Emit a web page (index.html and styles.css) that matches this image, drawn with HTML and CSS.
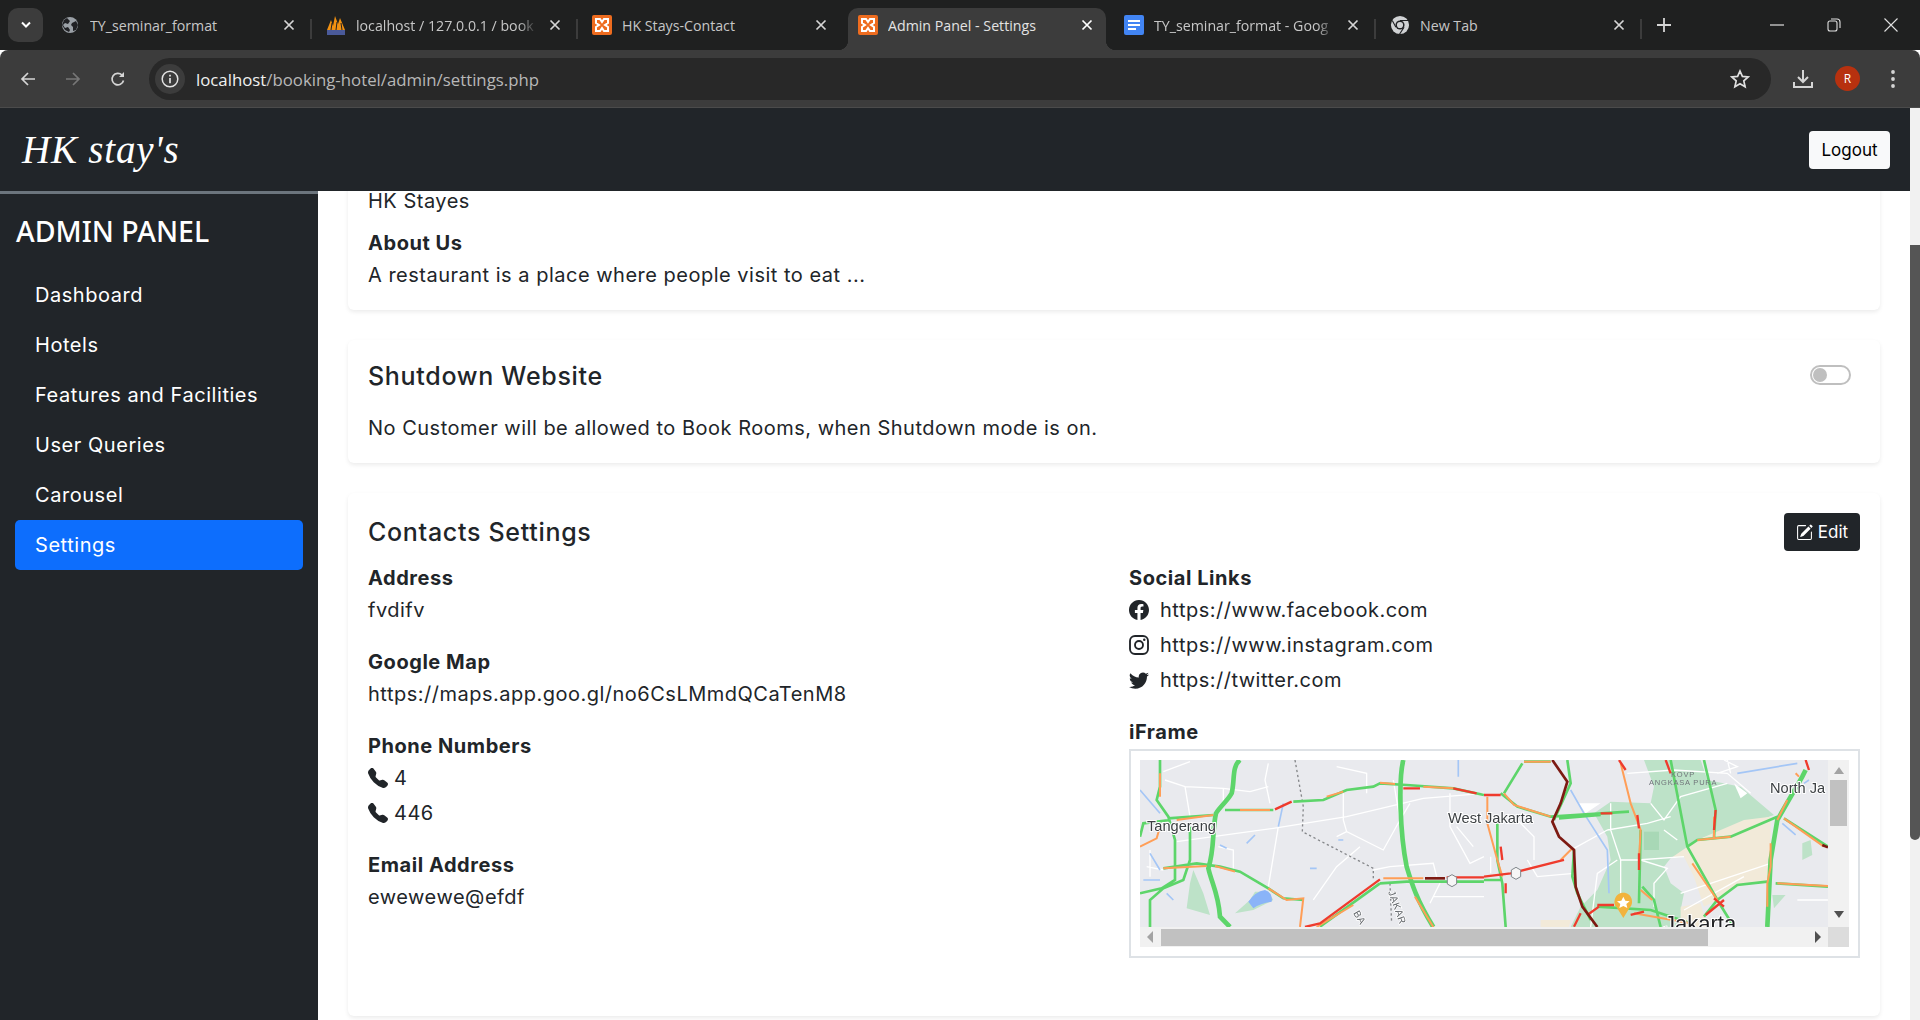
FILE: index.html
```html
<!DOCTYPE html>
<html lang="en">
<head>
  <meta charset="UTF-8">
  <title>Admin Panel - Settings</title>
  <link rel="stylesheet" href="styles.css">
</head>
<body>
  <div class="tabstrip">
    <div class="tab-search">
      <svg width="12" height="8" viewBox="0 0 12 8"><path d="M2 1.5 6 5.5 10 1.5" fill="none" stroke="#fff" stroke-width="2"/></svg>
    </div>
    <div class="tab">
      <svg class="favicon" viewBox="-2 -2 20 20"><circle cx="8" cy="8" r="8" fill="#9aa0a6"/><path d="M5 1 8 4 6 7 3 6 1 8 3 11 6 10 8 13 7 15 3 13 0 8 2 3zM10 6 14 4 16 8 14 13 11 14 11 10 9 8z" fill="#202124"/></svg>
      <span class="tab-title">TY_seminar_format</span>
      <svg class="tab-close" viewBox="0 0 16 16"><path d="M3.5 3.5 12.5 12.5M12.5 3.5 3.5 12.5" stroke="#d5d5d5" stroke-width="1.7"/></svg>
    </div>
    <div class="tab">
      <svg class="favicon" viewBox="0 0 20 20"><path d="M1 15 5 5 7 11 9 1 12 9 14 3 19 15z" fill="#f29111"/><path d="M1 15h18v5H1z" fill="#4a5a9a"/><path d="M6 8 5 15M11 7 10 15M15 8 16 15" stroke="#202124"/></svg>
      <span class="tab-title tab-fade">localhost / 127.0.0.1 / book</span>
      <svg class="tab-close" viewBox="0 0 16 16"><path d="M3.5 3.5 12.5 12.5M12.5 3.5 3.5 12.5" stroke="#d5d5d5" stroke-width="1.7"/></svg>
    </div>
    <div class="tab">
      <svg class="favicon" viewBox="0 0 20 20"><rect width="20" height="20" rx="2" fill="#ee6c1f"/><path d="M4 4h4l2 3 2-3h4v4l-3 2 3 2v4h-4l-2-3-2 3H4v-4l3-2-3-2z" fill="none" stroke="#fff" stroke-width="2"/></svg>
      <span class="tab-title">HK Stays-Contact</span>
      <svg class="tab-close" viewBox="0 0 16 16"><path d="M3.5 3.5 12.5 12.5M12.5 3.5 3.5 12.5" stroke="#d5d5d5" stroke-width="1.7"/></svg>
    </div>
    <div class="tab tab-active">
      <svg class="favicon" viewBox="0 0 20 20"><rect width="20" height="20" rx="2" fill="#ee6c1f"/><path d="M4 4h4l2 3 2-3h4v4l-3 2 3 2v4h-4l-2-3-2 3H4v-4l3-2-3-2z" fill="none" stroke="#fff" stroke-width="2"/></svg>
      <span class="tab-title">Admin Panel - Settings</span>
      <svg class="tab-close" viewBox="0 0 16 16"><path d="M3.5 3.5 12.5 12.5M12.5 3.5 3.5 12.5" stroke="#fff" stroke-width="1.7"/></svg>
    </div>
    <div class="tab">
      <svg class="favicon" viewBox="0 0 20 20"><rect width="20" height="20" rx="2" fill="#4285f4"/><path d="M4 6h12M4 10h12M4 14h8" stroke="#fff" stroke-width="2"/></svg>
      <span class="tab-title tab-fade">TY_seminar_format - Goog</span>
      <svg class="tab-close" viewBox="0 0 16 16"><path d="M3.5 3.5 12.5 12.5M12.5 3.5 3.5 12.5" stroke="#d5d5d5" stroke-width="1.7"/></svg>
    </div>
    <div class="tab">
      <svg class="favicon" viewBox="-1 -1 22 22"><circle cx="10" cy="10" r="10" fill="#d0d2d4"/><circle cx="10" cy="10" r="5" fill="#202124"/><circle cx="10" cy="10" r="3.4" fill="#d0d2d4"/><path d="M10 5h9M5.5 12.5 1.5 5M14.5 12.5 9.5 20" stroke="#202124" stroke-width="1.2"/></svg>
      <span class="tab-title">New Tab</span>
      <svg class="tab-close" viewBox="0 0 16 16"><path d="M3.5 3.5 12.5 12.5M12.5 3.5 3.5 12.5" stroke="#d5d5d5" stroke-width="1.7"/></svg>
    </div>
    <svg class="tab-new" viewBox="0 0 14 14"><path d="M7 0v14M0 7h14" stroke="#d5d5d5" stroke-width="1.8"/></svg>
    <div class="window-btns">
      <svg viewBox="0 0 14 14"><path d="M0 7h14" stroke="#e0e0e0" stroke-width="1.2"/></svg>
      <svg viewBox="0 0 14 14"><rect x="1" y="3" width="9" height="10" rx="2" fill="none" stroke="#e0e0e0" stroke-width="1.1"/><path d="M4 1h6a3 3 0 0 1 3 3v6" fill="none" stroke="#e0e0e0" stroke-width="1.1"/></svg>
      <svg viewBox="0 0 14 14"><path d="M0.5 0.5 13.5 13.5M13.5 0.5 0.5 13.5" stroke="#e0e0e0" stroke-width="1.1"/></svg>
    </div>
  </div>

  <div class="toolbar">
    <svg class="tool-icon" viewBox="0 0 16 16"><path d="M15 8H2M8 2 2 8l6 6" fill="none" stroke="#d5d5d5" stroke-width="1.7"/></svg>
    <svg class="tool-icon" viewBox="0 0 16 16"><path d="M1 8h13M8 2l6 6-6 6" fill="none" stroke="#777" stroke-width="1.7"/></svg>
    <svg class="tool-icon" viewBox="0 0 16 16"><path d="M13.5 9.5A5.8 5.8 0 1 1 12 4" fill="none" stroke="#d5d5d5" stroke-width="1.7"/><path d="M14 1v5H9z" fill="#d5d5d5"/></svg>
    <div class="omnibox">
      <div class="site-info">
        <svg width="18" height="18" viewBox="0 0 18 18"><circle cx="9" cy="9" r="7.8" fill="none" stroke="#e3e3e3" stroke-width="1.5"/><path d="M9 8v5.2M9 4.8v1.8" stroke="#e3e3e3" stroke-width="1.7"/></svg>
      </div>
      <span class="url"><b>localhost</b>/booking-hotel/admin/settings.php</span>
      <svg class="star" viewBox="0 0 20 20"><path d="M10 2l2.4 5.4 5.8.6-4.4 3.9 1.3 5.8-5.1-3-5.1 3 1.3-5.8L1.8 8l5.8-.6z" fill="none" stroke="#e0e0e0" stroke-width="1.7"/></svg>
    </div>
    <svg class="download" viewBox="0 0 20 20"><path d="M10 1v11M5 8l5 5 5-5" fill="none" stroke="#d5d5d5" stroke-width="2"/><path d="M1 13v5h18v-5" fill="none" stroke="#d5d5d5" stroke-width="2"/></svg>
    <div class="avatar">R</div>
    <svg class="dots" viewBox="0 0 4 18"><circle cx="2" cy="2" r="1.9" fill="#d5d5d5"/><circle cx="2" cy="9" r="1.9" fill="#d5d5d5"/><circle cx="2" cy="16" r="1.9" fill="#d5d5d5"/></svg>
  </div>

  <div class="page">
    <div class="view">
      <header class="topbar">
        <span class="logo">HK stay's</span>
        <a class="btn-logout">Logout</a>
      </header>
      <div class="layout">
        <aside class="sidebar">
          <h3>ADMIN PANEL</h3>
          <ul>
            <li>Dashboard</li>
            <li>Hotels</li>
            <li>Features and Facilities</li>
            <li>User Queries</li>
            <li>Carousel</li>
            <li class="active">Settings</li>
          </ul>
        </aside>
        <main class="main-content">
          <section class="card card-clipped">
            <p class="value first-value">HK Stayes</p>
            <h6>About Us</h6>
            <p class="value">A restaurant is a place where people visit to eat ...</p>
          </section>

          <section class="card">
            <div class="card-head shutdown-head">
              <h5>Shutdown Website</h5>
              <span class="switch"></span>
            </div>
            <p class="value">No Customer will be allowed to Book Rooms, when Shutdown mode is on.</p>
          </section>

          <section class="card">
            <div class="card-head">
              <h5>Contacts Settings</h5>
              <a class="btn-edit">
                <svg viewBox="0 0 16 16"><path fill="#fff" d="M15.502 1.94a.5.5 0 0 1 0 .706L14.459 3.69l-2-2L13.502.646a.5.5 0 0 1 .707 0l1.293 1.293zm-1.75 2.456-2-2L4.939 9.21a.5.5 0 0 0-.121.196l-.805 2.414a.25.25 0 0 0 .316.316l2.414-.805a.5.5 0 0 0 .196-.12l6.813-6.814z"/><path fill="#fff" d="M1 13.5A1.5 1.5 0 0 0 2.5 15h11a1.5 1.5 0 0 0 1.5-1.5v-6a.5.5 0 0 0-1 0v6a.5.5 0 0 1-.5.5h-11a.5.5 0 0 1-.5-.5v-11a.5.5 0 0 1 .5-.5H9a.5.5 0 0 0 0-1H2.5A1.5 1.5 0 0 0 1 2.5v11z"/></svg>
                Edit
              </a>
            </div>
            <div class="contact-grid">
              <div>
                <div class="group">
                  <h6>Address</h6>
                  <p class="value">fvdifv</p>
                </div>
                <div class="group">
                  <h6>Google Map</h6>
                  <p class="value">https://maps.app.goo.gl/no6CsLMmdQCaTenM8</p>
                </div>
                <div class="group">
                  <h6>Phone Numbers</h6>
                  <p class="value row">
                    <svg class="phone" viewBox="0 0 16 16"><path d="M1.885.511a1.745 1.745 0 0 1 2.61.163L6.29 2.98c.329.423.445.974.315 1.494l-.547 2.19a.678.678 0 0 0 .178.643l2.457 2.457a.678.678 0 0 0 .644.178l2.189-.547a1.745 1.745 0 0 1 1.494.315l2.306 1.794c.829.645.905 1.87.163 2.611l-1.034 1.034c-.74.74-1.846 1.065-2.877.702a18.634 18.634 0 0 1-7.01-4.42 18.634 18.634 0 0 1-4.42-7.009c-.362-1.03-.037-2.137.703-2.877L1.885.511z"/></svg>
                    4
                  </p>
                  <p class="value row">
                    <svg class="phone" viewBox="0 0 16 16"><path d="M1.885.511a1.745 1.745 0 0 1 2.61.163L6.29 2.98c.329.423.445.974.315 1.494l-.547 2.19a.678.678 0 0 0 .178.643l2.457 2.457a.678.678 0 0 0 .644.178l2.189-.547a1.745 1.745 0 0 1 1.494.315l2.306 1.794c.829.645.905 1.87.163 2.611l-1.034 1.034c-.74.74-1.846 1.065-2.877.702a18.634 18.634 0 0 1-7.01-4.42 18.634 18.634 0 0 1-4.42-7.009c-.362-1.03-.037-2.137.703-2.877L1.885.511z"/></svg>
                    446
                  </p>
                </div>
                <div class="group">
                  <h6>Email Address</h6>
                  <p class="value">ewewewe@efdf</p>
                </div>
              </div>
              <div>
                <div class="group">
                  <h6>Social Links</h6>
                  <p class="value row">
                    <svg class="social" viewBox="0 0 16 16"><path d="M16 8.049c0-4.446-3.582-8.05-8-8.05C3.58 0-.002 3.603-.002 8.05c0 4.017 2.926 7.347 6.75 7.951v-5.625h-2.03V8.05H6.75V6.275c0-2.017 1.195-3.131 3.022-3.131.876 0 1.791.157 1.791.157v1.98h-1.009c-.993 0-1.303.621-1.303 1.258v1.51h2.218l-.354 2.326H9.25V16c3.824-.604 6.75-3.934 6.75-7.951z"/></svg>
                    https://www.facebook.com
                  </p>
                  <p class="value row">
                    <svg class="social" viewBox="0 0 16 16"><rect x=".8" y=".8" width="14.4" height="14.4" rx="4" fill="none" stroke="#212529" stroke-width="1.5"/><circle cx="8" cy="8" r="3.2" fill="none" stroke="#212529" stroke-width="1.5"/><circle cx="12.2" cy="3.8" r="1"/></svg>
                    https://www.instagram.com
                  </p>
                  <p class="value row">
                    <svg class="social" viewBox="0 0 16 16"><path d="M5.026 15c6.038 0 9.341-5.003 9.341-9.334 0-.14 0-.282-.006-.422A6.685 6.685 0 0 0 16 3.542a6.658 6.658 0 0 1-1.889.518 3.301 3.301 0 0 0 1.447-1.817 6.533 6.533 0 0 1-2.087.793A3.286 3.286 0 0 0 7.875 6.03a9.325 9.325 0 0 1-6.767-3.429 3.289 3.289 0 0 0 1.018 4.382A3.323 3.323 0 0 1 .64 6.575v.045a3.288 3.288 0 0 0 2.632 3.218 3.203 3.203 0 0 1-.865.115 3.23 3.23 0 0 1-.614-.057 3.283 3.283 0 0 0 3.067 2.277A6.588 6.588 0 0 1 .78 13.58a6.32 6.32 0 0 1-.78-.045A9.344 9.344 0 0 0 5.026 15z"/></svg>
                    https://twitter.com
                  </p>
                </div>
                <h6>iFrame</h6>
                <div class="map-frame">
                  <div class="map-row">
                    <svg class="map" width="688" height="167" viewBox="0 0 688 167">
                      <rect width="688" height="167" fill="#e9eaee"/>
                      <!-- west half -->
                      <g transform="scale(.3333)">
                        <path class="park" d="M160 330 190 400 210 465 140 445 150 370zM285 460 330 420 345 395 385 395 400 420 340 450z"/>
                        <path class="lake" d="M325 425Q345 395 375 390 400 400 395 425 360 430 340 445z"/>
                        <path class="minor" d="M70 35 150 5M75 60 135 80 250 85 330 95 385 80M135 80 150 170M250 85V140M385 10 375 60 390 130M110 245 400 205 620 170 850 115 1032 100M415 200 385 380M235 260 280 270V330M610 100V180L620 215 730 270 780 180 760 60M590 230 620 215M660 260 590 320 520 420M700 330 750 320 880 310 890 350M780 180 810 130M930 100V200L990 310 1032 290M880 410H1032M870 430 900 370M590 20 680 40V100M20 320 70 330M30 270V350M950 200 1000 260"/>
                        <path class="river" d="M0 90 60 160M30 280 60 330M10 360H60M80 400 100 420M320 250 345 225M510 325H530M595 240H610M955 0V50M430 130 415 200M240 255 260 265"/>
                        <path class="border" d="M465 0 490 140 487 215 700 325V360M750 370 755 490"/>
                        <path class="road-g road-wide" d="M300 0C275 20 285 60 275 100 265 120 240 140 228 160 215 220 225 260 205 325 215 370 235 400 240 470L270 501M790 0C775 60 780 220 800 320 815 370 830 420 880 501"/>
                        <path class="road-g" d="M60 0V80L50 120 85 170 105 240V360L65 385 0 400M150 200V300L130 360 70 385 30 420V501M85 175 220 165M0 230 10 190 90 180M255 150H400M460 125 550 120 620 90 700 80 720 70 800 75 940 85 1032 105M70 325 170 310 240 320 300 335 385 385 430 415 490 420M720 370 800 365H1032M540 500 720 370"/>
                        <path class="road-o" d="M60 40V110M0 260 50 235 60 200M110 180 220 165M300 150H390M70 325 200 318M225 318 285 335M385 385 440 420 490 415 480 501M560 110 610 95M720 68 765 72M850 80 940 85M730 355H850M640 435 530 501M825 410 880 501"/>
                        <path class="road-r" d="M495 501 540 490 720 358M405 148 455 125M790 85H840M940 85 1010 100M920 352H1032"/>
                        <path class="road-d" d="M855 355H915"/>
                        <path class="shield" d="M922 352 936 344 950 352V372L936 380 922 372z"/>
                      </g>
                      <!-- east half -->
                      <g transform="translate(344) scale(.3333)">
                        <path class="park" d="M480 0H650L670 60 770 80 870 165 800 190 720 210 640 240 600 290 560 295 540 320 560 370 600 400 590 450 640 501H260L290 440 340 390 380 300 370 230 330 160 380 125 500 130 510 80zM955 250 980 240 985 285 955 300zM865 405H905L870 445z"/>
                        <path class="park-dark" d="M480 215H525V270H480z"/>
                        <path class="sand" d="M640 240 780 180 860 170V310L850 360 760 380 700 420 660 440 630 350 600 290 560 295zM170 480H260L255 501H170zM590 440 650 430 670 501H590z"/>
                        <path class="minor" d="M430 40 570 30 730 40 800 100M500 130 540 180 590 110 730 70M380 130V210L410 300H460L600 290M370 210 490 190 560 170M270 265 370 210M400 300 340 340 320 501M410 300V400M470 300 550 325 510 370V440M590 400 860 310M600 450 780 350M540 210 580 240M100 180 150 230V300M130 300 160 350 270 340M20 290V340M700 40 760 20 720 0M940 420H1032M730 0 740 40"/>
                        <path d="M285 130H350L305 160z" fill="#fff"/>
                        <path d="M750 70 790 100 770 115z" fill="#fff"/>
                        <path class="river" d="M260 90 300 160 370 270 375 400M760 40 940 10M895 190 935 225M960 70 975 60"/>
                        <path class="road-g road-wide" d="M965 30 955 50 880 180 860 300 850 501"/>
                        <path class="road-g" d="M120 5H200M115 10 60 100M250 0 260 70 210 180M50 100 100 140 200 170 435 155M225 175 350 165M0 360H55M270 270 265 350 280 400 320 480M40 190V300L55 370 65 501M470 210 465 430M475 380 510 420 530 501M560 0 610 260 700 420 750 501M660 0 695 150 690 235M610 260 640 240 740 230 880 170M900 175 1032 260M660 470 700 420 760 375 850 365M875 370 1032 380M340 440 500 450 620 490"/>
                        <path class="road-o" d="M10 110V190L40 300 55 350M60 100 90 135 200 170M410 10 440 130 470 210 465 300M625 310 700 420M640 240 740 230M690 170V235M910 120 880 180M860 250V320L850 370V440M880 370 1032 378M900 175 1020 260M470 390 505 420M450 460 620 490M230 300 265 265M935 40 945 50M120 5H200"/>
                        <path class="road-r" d="M0 350 80 340 240 300M0 105H50M545 0 560 40M405 0 425 30M965 0 975 30M350 160H385M460 165 465 205M465 280V330M50 260 55 300M65 370V400M695 150 690 210M665 465 720 420M690 415 720 440M340 435H390M310 465 345 440M270 500 290 460M440 465 480 455"/>
                        <path class="road-d" d="M205 0 250 65 230 130 205 185 225 230 270 270 275 380 295 440 340 501M1015 255 1032 262"/>
                        <path class="shield" d="M82 330 96 322 110 330V350L96 358 82 350z"/>
                        <path d="M418 398C392 398 385 430 398 442L418 474 438 442C451 430 444 398 418 398z" fill="#f2b33d"/>
                        <path d="M418 410 424 422 437 424 427 432 430 444 418 438 406 444 409 432 399 424 412 422z" fill="#fff"/>
                      </g>
                      <text class="map-label" x="7" y="71">Tangerang</text>
                      <text class="map-label" x="308" y="63">West Jakarta</text>
                      <text class="map-label map-big" x="524" y="171">Jakarta</text>
                      <text class="map-label" x="630" y="33">North Ja</text>
                      <text class="map-tiny" x="531" y="17">KOVP</text>
                      <text class="map-tiny" x="509" y="25">ANGKASA PURA</text>
                      <text class="map-road" transform="translate(248 132) rotate(70)">JAKAR</text>
                      <text class="map-road" transform="translate(213 153) rotate(60)">BA</text>
                    </svg>
                    <div class="map-vbar">
                      <svg width="10" height="7" viewBox="0 0 10 7"><path d="M5 0l5 7H0z" fill="#a3a3a3"/></svg>
                      <span class="map-vthumb"></span>
                      <svg class="map-vdown" width="10" height="7" viewBox="0 0 10 7"><path d="M0 0h10L5 7z" fill="#505050"/></svg>
                    </div>
                  </div>
                  <div class="map-hbar">
                    <svg width="6" height="12" viewBox="0 0 6 12"><path d="M6 0v12L0 6z" fill="#a3a3a3"/></svg>
                    <span class="map-hthumb"></span>
                    <svg width="6" height="12" viewBox="0 0 6 12"><path d="M0 0v12l6-6z" fill="#505050"/></svg>
                    <span class="map-corner"></span>
                  </div>
                </div>
              </div>
            </div>
          </section>
        </main>
      </div>
    </div>
    <div class="page-scroll"><span class="page-thumb"></span></div>
  </div>
</body>
</html>
```

FILE: styles.css
```css
* { margin: 0; padding: 0; box-sizing: border-box; }
html, body { height: 100%; overflow: hidden; }
body { font-family: Inter, "Noto Sans", sans-serif; background: #fff; color: #212529; display: flex; flex-direction: column; }

/* browser chrome */
.tabstrip { height: 50px; background: #1f2020; display: flex; align-items: flex-start; padding-left: 8px; font-family: "Open Sans", sans-serif; flex-shrink: 0; }
.tab-search { width: 35px; height: 34px; margin-top: 8px; margin-right: 3px; border-radius: 10px; background: #3c3c3c; display: flex; align-items: center; justify-content: center; }
.tab { position: relative; width: 258px; height: 42px; margin: 8px 4px 0; padding: 0 11px 8px 10px; display: flex; align-items: center; gap: 10px; color: #c7c7c7; font-size: 14.2px; }
.tab::after { content: ""; position: absolute; right: -4px; top: 11px; width: 2px; height: 20px; background: #3c3c3c; }
.tab:nth-of-type(4)::after { background: transparent; }
.tab-active { background: #3c3c3c; color: #e3e3e3; border-radius: 10px 10px 0 0; }
.tab-active::before { content: ""; position: absolute; left: -10px; bottom: 0; width: 10px; height: 10px; background: radial-gradient(circle at 0 0, transparent 10px, #3c3c3c 10.5px); }
.tab-active::after { right: -10px; top: auto; bottom: 0; width: 10px; height: 10px; background: radial-gradient(circle at 100% 0, transparent 10px, #3c3c3c 10.5px); }
.favicon { width: 20px; height: 20px; flex-shrink: 0; }
.tab-title { flex: 1; white-space: nowrap; overflow: hidden; }
.tab-fade { -webkit-mask-image: linear-gradient(to right, #000 90%, transparent); mask-image: linear-gradient(to right, #000 90%, transparent); }
.tab-close { width: 16px; height: 16px; flex-shrink: 0; }
.tab-new { width: 14px; height: 14px; margin: 18px 0 0 15px; }
.window-btns { margin-left: 99px; margin-top: 18px; display: flex; gap: 43px; }
.window-btns svg { width: 14px; height: 14px; }

.toolbar { height: 58px; background: #3c3c3c; border-bottom: 1px solid #4b4b4b; border-radius: 8px 8px 0 0; display: flex; align-items: center; padding-left: 20px; flex-shrink: 0; }
.tool-icon { width: 16px; height: 16px; margin-right: 29px; }
.omnibox { width: 1622px; height: 42px; margin-left: -6px; background: #282828; border-radius: 21px; display: flex; align-items: center; padding: 0 21px 0 6px; }
.site-info { width: 30px; height: 30px; border-radius: 50%; background: #3c3c3c; display: flex; align-items: center; justify-content: center; margin-right: 11px; }
.url { flex: 1; padding-top: 1px; font-family: "Open Sans", sans-serif; font-size: 16.8px; color: #b8b8b8; white-space: nowrap; }
.url b { font-weight: 400; color: #f0f0f0; }
.star { width: 20px; height: 20px; }
.download { width: 20px; height: 20px; margin-left: 22px; }
.avatar { width: 25px; height: 25px; margin-left: 22px; border-radius: 50%; background: #b7310f; color: #fff; font-family: "Open Sans", sans-serif; font-size: 12px; display: flex; align-items: center; justify-content: center; }
.dots { width: 4px; height: 18px; margin-left: 31px; }

/* page */
.page { flex: 1; display: flex; min-height: 0; }
.view { flex: 1; min-width: 0; display: flex; flex-direction: column; }
.page-scroll { width: 10px; background: #f1f1f1; }
.page-thumb { display: block; width: 10px; height: 595px; margin-top: 137px; background: #555; border-radius: 0 0 5px 5px; }

.topbar { height: 83px; background: #212529; display: flex; align-items: center; justify-content: space-between; padding: 0 20px 0 22px; flex-shrink: 0; }
.logo { font-family: "Liberation Serif", serif; font-style: italic; font-size: 39px; color: #fff; letter-spacing: .8px; }
.btn-logout { width: 81px; height: 38px; background: #f8f9fa; border-radius: 4px; color: #000; font-size: 17px; display: flex; align-items: center; justify-content: center; }

.layout { flex: 1; display: flex; min-height: 0; }
.sidebar { width: 318px; background: #212529; border-top: 3px solid #6c757d; color: #fff; padding: 0 15px; flex-shrink: 0; }
.sidebar h3 { font-family: "Noto Sans", sans-serif; font-weight: 500; font-size: 28.5px; line-height: 40px; padding-top: 17px; padding-left: 1px; margin-bottom: 19px; }
.sidebar ul { list-style: none; }
.sidebar li { height: 50px; line-height: 50px; padding-left: 20px; font-size: 20px; border-radius: 5px; letter-spacing: .55px; }
.sidebar li.active { background: #0d6efd; }

.main-content { flex: 1; min-width: 0; padding: 0 30px; overflow: hidden; background: #fff; }
.card { background: #fff; border-radius: 6px; box-shadow: 0 2px 4px rgba(0,0,0,.08); padding: 20px; margin-bottom: 30px; }
.card-clipped { margin-top: -25px; }
.value { font-size: 20px; line-height: 30px; letter-spacing: .5px; }
.first-value { margin-bottom: 15px; }
h6 { font-size: 20px; line-height: 24px; font-weight: 700; margin-bottom: 5px; letter-spacing: .55px; }
h5 { font-size: 25px; line-height: 30px; font-weight: 500; letter-spacing: .7px; }
.card-head { display: flex; align-items: center; justify-content: space-between; height: 38px; margin-bottom: 15px; }
.shutdown-head { height: 32px; margin-bottom: 21px; }
.switch { position: relative; width: 41px; height: 20px; margin-right: 9px; margin-top: -2px; border: 2px solid #bfbfbf; border-radius: 10px; background: #fff; }
.switch::after { content: ""; position: absolute; left: 1px; top: 1px; width: 14px; height: 14px; border-radius: 50%; background: #bfbfbf; }
.btn-edit { width: 76px; height: 38px; background: #212529; border-radius: 4px; color: #fff; font-size: 17px; display: flex; align-items: center; justify-content: center; gap: 5px; }
.btn-edit svg { width: 17px; height: 17px; }

.contact-grid { display: grid; grid-template-columns: 1fr 1fr; column-gap: 30px; }
.group { margin-bottom: 25px; }
.row { display: flex; align-items: center; margin-bottom: 5px; }
.phone { width: 20px; height: 20px; margin-right: 6px; fill: #212529; }
.social { width: 20px; height: 20px; margin-right: 11px; fill: #212529; }

.map-frame { border: 2px solid #dee2e6; padding: 9px; margin-bottom: 38px; width: 731px; height: 209px; }
.map-row { display: flex; height: 167px; }
.map { display: block; flex-shrink: 0; filter: blur(.3px); }
.park { fill: #bde2c8; }
.park-dark { fill: #a8d8b6; }
.sand { fill: #f2ead9; }
.lake { fill: #8ab4f8; }
.minor { fill: none; stroke: #fff; stroke-width: 4; }
.river { fill: none; stroke: #a4c6f6; stroke-width: 5; }
.border { fill: none; stroke: #85878a; stroke-width: 4; stroke-dasharray: 7 8; }
.road-g { fill: none; stroke: #5dd56a; stroke-width: 8; }
.road-wide { stroke-width: 14; }
.road-o { fill: none; stroke: #ff9e57; stroke-width: 6; }
.road-r { fill: none; stroke: #ef3b2d; stroke-width: 7; }
.road-d { fill: none; stroke: #7d1a12; stroke-width: 8; }
.shield { fill: #f6f6f6; stroke: #80868b; stroke-width: 3; }
.map-label { font-family: "Liberation Sans", sans-serif; font-size: 14.6px; fill: #3c4043; stroke: #fff; stroke-width: 2px; paint-order: stroke; }
.map-big { font-size: 22px; fill: #202124; }
.map-tiny { font-family: "Liberation Sans", sans-serif; font-size: 7.5px; letter-spacing: .8px; fill: #70757a; }
.map-road { font-family: "Liberation Sans", sans-serif; font-size: 10px; letter-spacing: .6px; fill: #5f6368; stroke: #fff; stroke-width: 1.5px; paint-order: stroke; }
.map-vbar { width: 21px; background: #f1f1f1; display: flex; flex-direction: column; align-items: center; padding: 7px 0 9px; }
.map-vthumb { width: 17px; height: 46px; margin-top: 6px; background: #c1c1c1; }
.map-vdown { margin-top: auto; }
.map-hbar { height: 20px; background: #f1f1f1; display: flex; align-items: center; padding-left: 7px; }
.map-hthumb { width: 547px; height: 17px; margin: 0 107px 0 8px; background: #c1c1c1; }
.map-corner { width: 21px; height: 20px; margin-left: auto; background: #dcdcdc; }
```
